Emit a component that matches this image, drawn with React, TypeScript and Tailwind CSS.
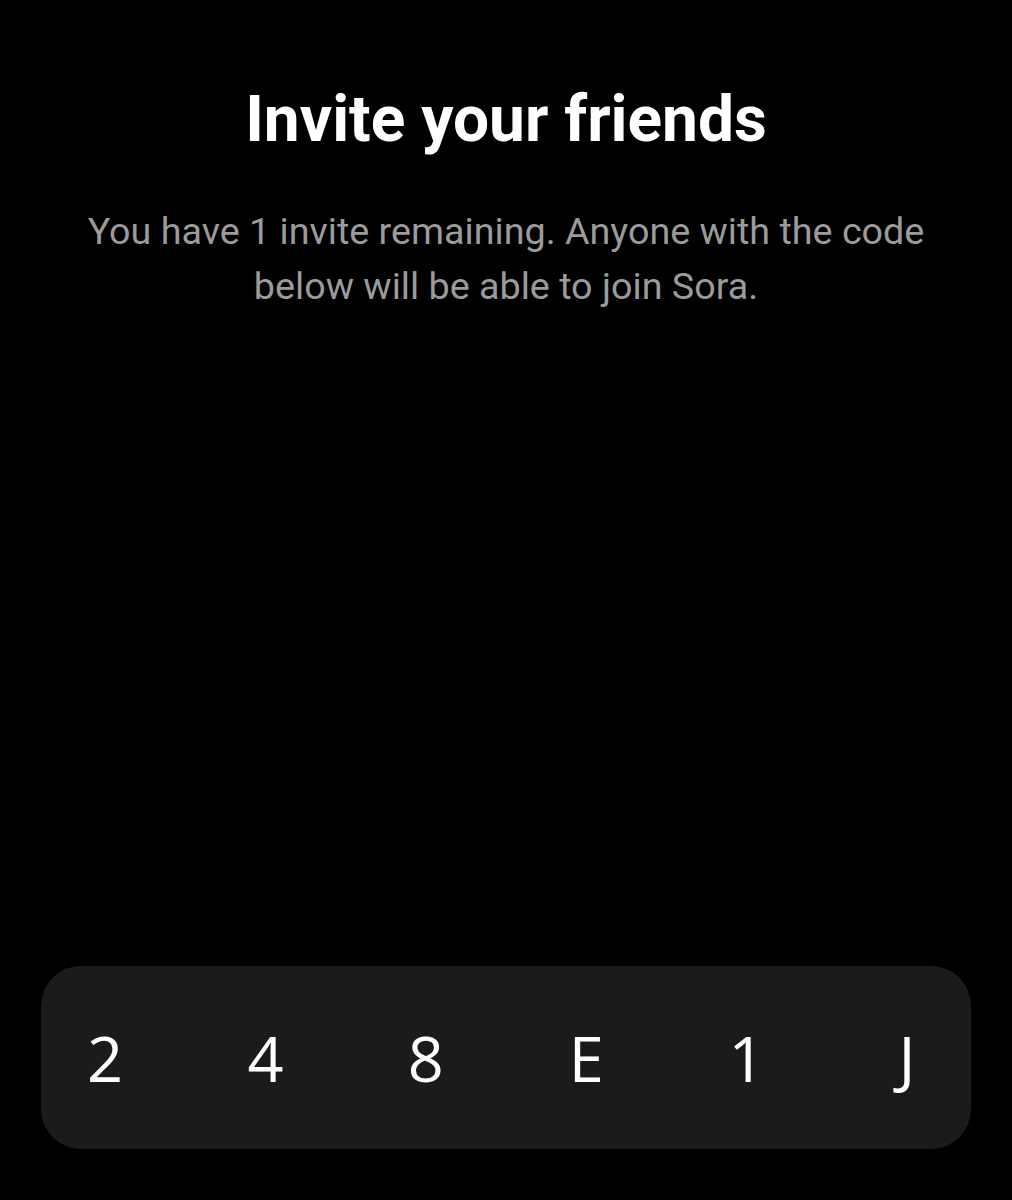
export default function App() {
  const code = ["2", "4", "8", "E", "1", "J"];
  return (
    <div className="w-[1012px] h-[1200px] bg-black flex flex-col items-center" style={{ fontFamily: "Roboto, 'Noto Sans', sans-serif" }}>
      <h1 className="mt-[76px] text-[64px] leading-[88px] font-bold text-white text-center">Invite your friends</h1>
      <p className="mt-[40px] w-[900px] text-[37.7px] leading-[55px] text-[#9b9b9b] text-center">
        You have 1 invite remaining. Anyone with the code below will be able to join Sora.
      </p>
      <div className="mt-auto mb-[51px] w-[930px] h-[183px] rounded-[40px] bg-[#1b1b1b] flex items-center justify-between px-[44px]">
        {code.map((c, i) => (
          <span key={i} className="w-[40px] text-center text-white text-[63px] leading-[80px] font-normal" style={{ fontFamily: "'Open Sans', sans-serif" }}>
            {c}
          </span>
        ))}
      </div>
    </div>
  );
}
